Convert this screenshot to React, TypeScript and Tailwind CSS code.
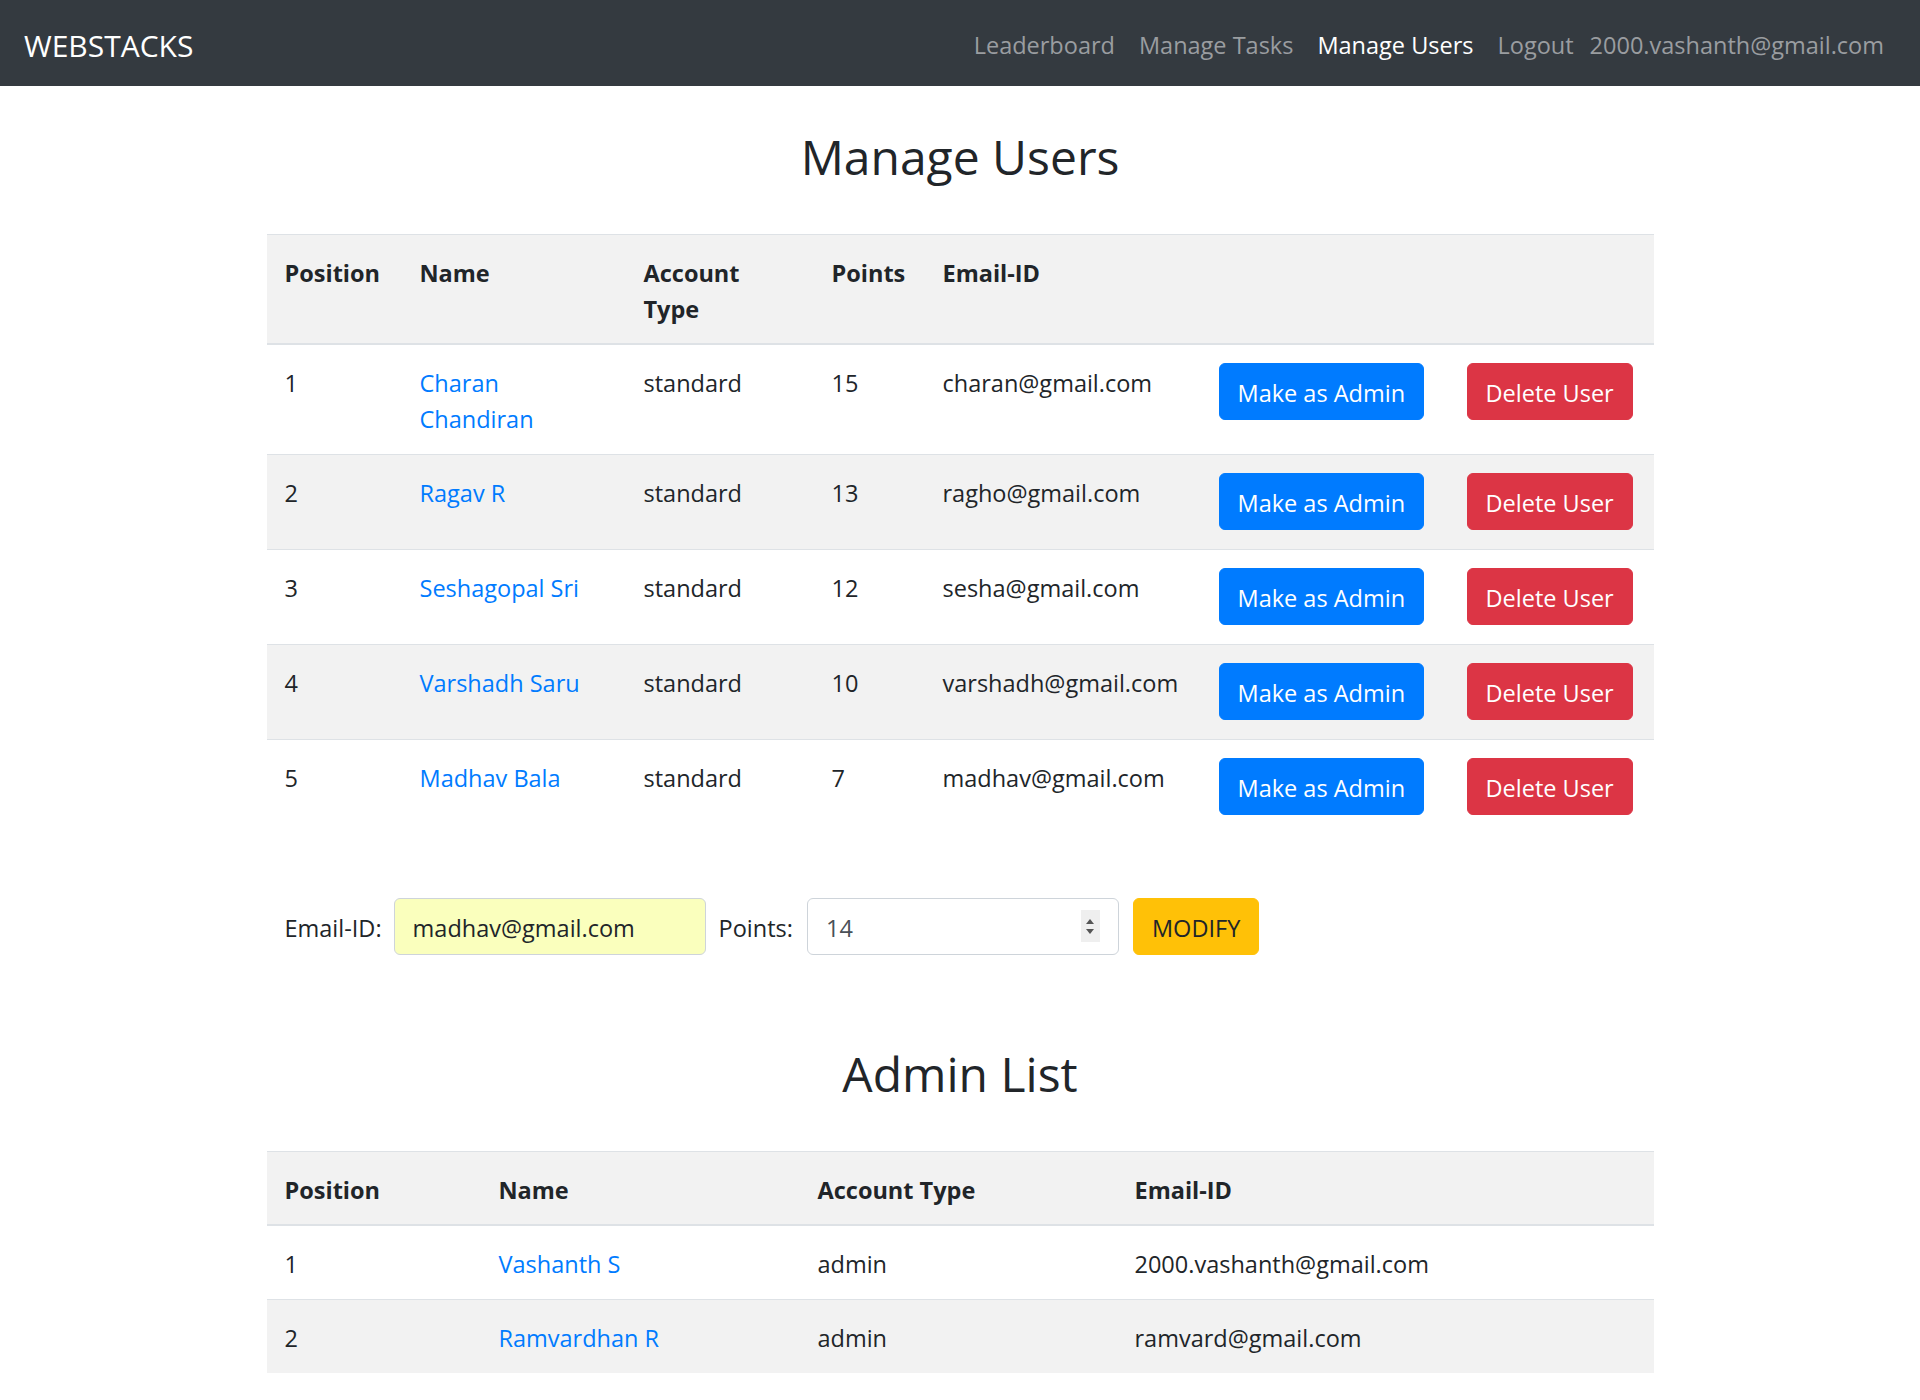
import React from "react";

const users = [
  { pos: 1, name: "Charan Chandiran", type: "standard", points: 15, email: "charan@gmail.com" },
  { pos: 2, name: "Ragav R", type: "standard", points: 13, email: "ragho@gmail.com" },
  { pos: 3, name: "Seshagopal Sri", type: "standard", points: 12, email: "sesha@gmail.com" },
  { pos: 4, name: "Varshadh Saru", type: "standard", points: 10, email: "varshadh@gmail.com" },
  { pos: 5, name: "Madhav Bala", type: "standard", points: 7, email: "madhav@gmail.com" },
];

const admins = [
  { pos: 1, name: "Vashanth S", type: "admin", email: "2000.vashanth@gmail.com" },
  { pos: 2, name: "Ramvardhan R", type: "admin", email: "ramvard@gmail.com" },
];

const th = "text-left align-top font-bold px-[18px] pt-[20px] pb-[16px] border-t border-b-2 border-[#dee2e6]";
const td = "align-top px-[18px] pt-[20px] pb-[17px] border-t border-[#dee2e6]";
const tdBtn = "align-top px-[18px] pt-[18px] pb-[19px] border-t border-[#dee2e6]";
const atd = "px-[18px] pt-[20px] pb-[17px] border-t border-[#dee2e6]";

export default function App() {
  return (
    <div
      className="min-h-[1400px] bg-white text-[#212529] text-[23.5px] leading-[36px]"
      style={{ fontFamily: '"Open Sans", "Noto Sans", sans-serif' }}
    >
      <nav className="h-[86px] bg-[#343a40] flex items-center justify-between px-[24px] pt-[4px]">
        <a className="text-white text-[30px] leading-[45px]">WEBSTACKS</a>
        <ul className="flex items-center text-[23.5px]">
          <li className="px-[12px] text-[#9a9da0]">Leaderboard</li>
          <li className="px-[12px] text-[#9a9da0]">Manage Tasks</li>
          <li className="px-[12px] text-white">Manage Users</li>
          <li className="px-[12px] text-[#9a9da0]">Logout</li>
          <li className="pl-[4px] pr-[12px] text-[#9a9da0]">2000.vashanth@gmail.com</li>
        </ul>
      </nav>

      <main className="w-[1387px] mx-auto">
        <h1 className="mt-[41px] mb-[47px] text-center text-[48px] leading-[60px] font-medium">
          Manage Users
        </h1>

        <table className="w-full table-fixed border-collapse">
          <colgroup>
            <col className="w-[135px]" />
            <col className="w-[224px]" />
            <col className="w-[188px]" />
            <col className="w-[111px]" />
            <col className="w-[276px]" />
            <col className="w-[248px]" />
            <col className="w-[205px]" />
          </colgroup>
          <thead>
            <tr className="bg-[#f2f2f2]">
              <th className={th}>Position</th>
              <th className={th}>Name</th>
              <th className={th}>Account Type</th>
              <th className={th}>Points</th>
              <th className={th}>Email-ID</th>
              <th className={th}></th>
              <th className={th}></th>
            </tr>
          </thead>
          <tbody>
            {users.map((u, i) => (
              <tr key={u.pos} className={i % 2 === 1 ? "bg-[#f2f2f2]" : "bg-white"}>
                <td className={td}>{u.pos}</td>
                <td className={td + " text-[#007bff]"}>{u.name}</td>
                <td className={td}>{u.type}</td>
                <td className={td}>{u.points}</td>
                <td className={td + " whitespace-nowrap"}>{u.email}</td>
                <td className={tdBtn}>
                  <button className="h-[57px] px-[18px] pt-[2px] rounded-[6px] bg-[#007bff] border border-[#007bff] text-white whitespace-nowrap leading-[36px]">
                    Make as Admin
                  </button>
                </td>
                <td className={tdBtn}>
                  <button className="h-[57px] px-[18px] pt-[2px] rounded-[6px] bg-[#dc3545] border border-[#dc3545] text-white whitespace-nowrap leading-[36px]">
                    Delete User
                  </button>
                </td>
              </tr>
            ))}
          </tbody>
        </table>

        <form className="mt-[64px] flex items-center px-[18px]" onSubmit={(e) => e.preventDefault()}>
          <label className="mr-[12px] pt-[2px]">Email-ID:</label>
          <input
            readOnly
            value="madhav@gmail.com"
            className="w-[312px] h-[57px] px-[18px] pt-[2px] rounded-[6px] border border-[#ced4da] bg-[#faffbd] text-[#212529] outline-none"
          />
          <label className="ml-[13px] mr-[14px] pt-[2px]">Points:</label>
          <div className="relative w-[312px] h-[57px]">
            <input
              readOnly
              value="14"
              className="w-full h-full px-[18px] pt-[2px] rounded-[6px] border border-[#ced4da] bg-white text-[#495057] outline-none"
            />
            <div className="absolute right-[19px] top-[12px] w-[19px] h-[32px] bg-[#efefef] flex flex-col items-center justify-center gap-[5px]">
              <svg width="8" height="5" viewBox="0 0 8 5"><path d="M4 0 L8 5 L0 5 Z" fill="#555" /></svg>
              <svg width="8" height="5" viewBox="0 0 8 5"><path d="M0 0 L8 0 L4 5 Z" fill="#555" /></svg>
            </div>
          </div>
          <button className="ml-[14px] h-[57px] px-[18px] pt-[2px] rounded-[6px] bg-[#ffc107] border border-[#ffc107] text-[#212529] leading-[36px]">
            MODIFY
          </button>
        </form>

        <h1 className="mt-[89px] mb-[47px] text-center text-[48px] leading-[60px] font-medium">
          Admin List
        </h1>

        <table className="w-full table-fixed border-collapse">
          <colgroup>
            <col className="w-[214px]" />
            <col className="w-[319px]" />
            <col className="w-[317px]" />
            <col className="w-[537px]" />
          </colgroup>
          <thead>
            <tr className="bg-[#f2f2f2]">
              <th className={th}>Position</th>
              <th className={th}>Name</th>
              <th className={th}>Account Type</th>
              <th className={th}>Email-ID</th>
            </tr>
          </thead>
          <tbody>
            {admins.map((a, i) => (
              <tr key={a.pos} className={i % 2 === 1 ? "bg-[#f2f2f2]" : "bg-white"}>
                <td className={atd}>{a.pos}</td>
                <td className={atd + " text-[#007bff]"}>{a.name}</td>
                <td className={atd}>{a.type}</td>
                <td className={atd}>{a.email}</td>
              </tr>
            ))}
          </tbody>
        </table>
      </main>
    </div>
  );
}
